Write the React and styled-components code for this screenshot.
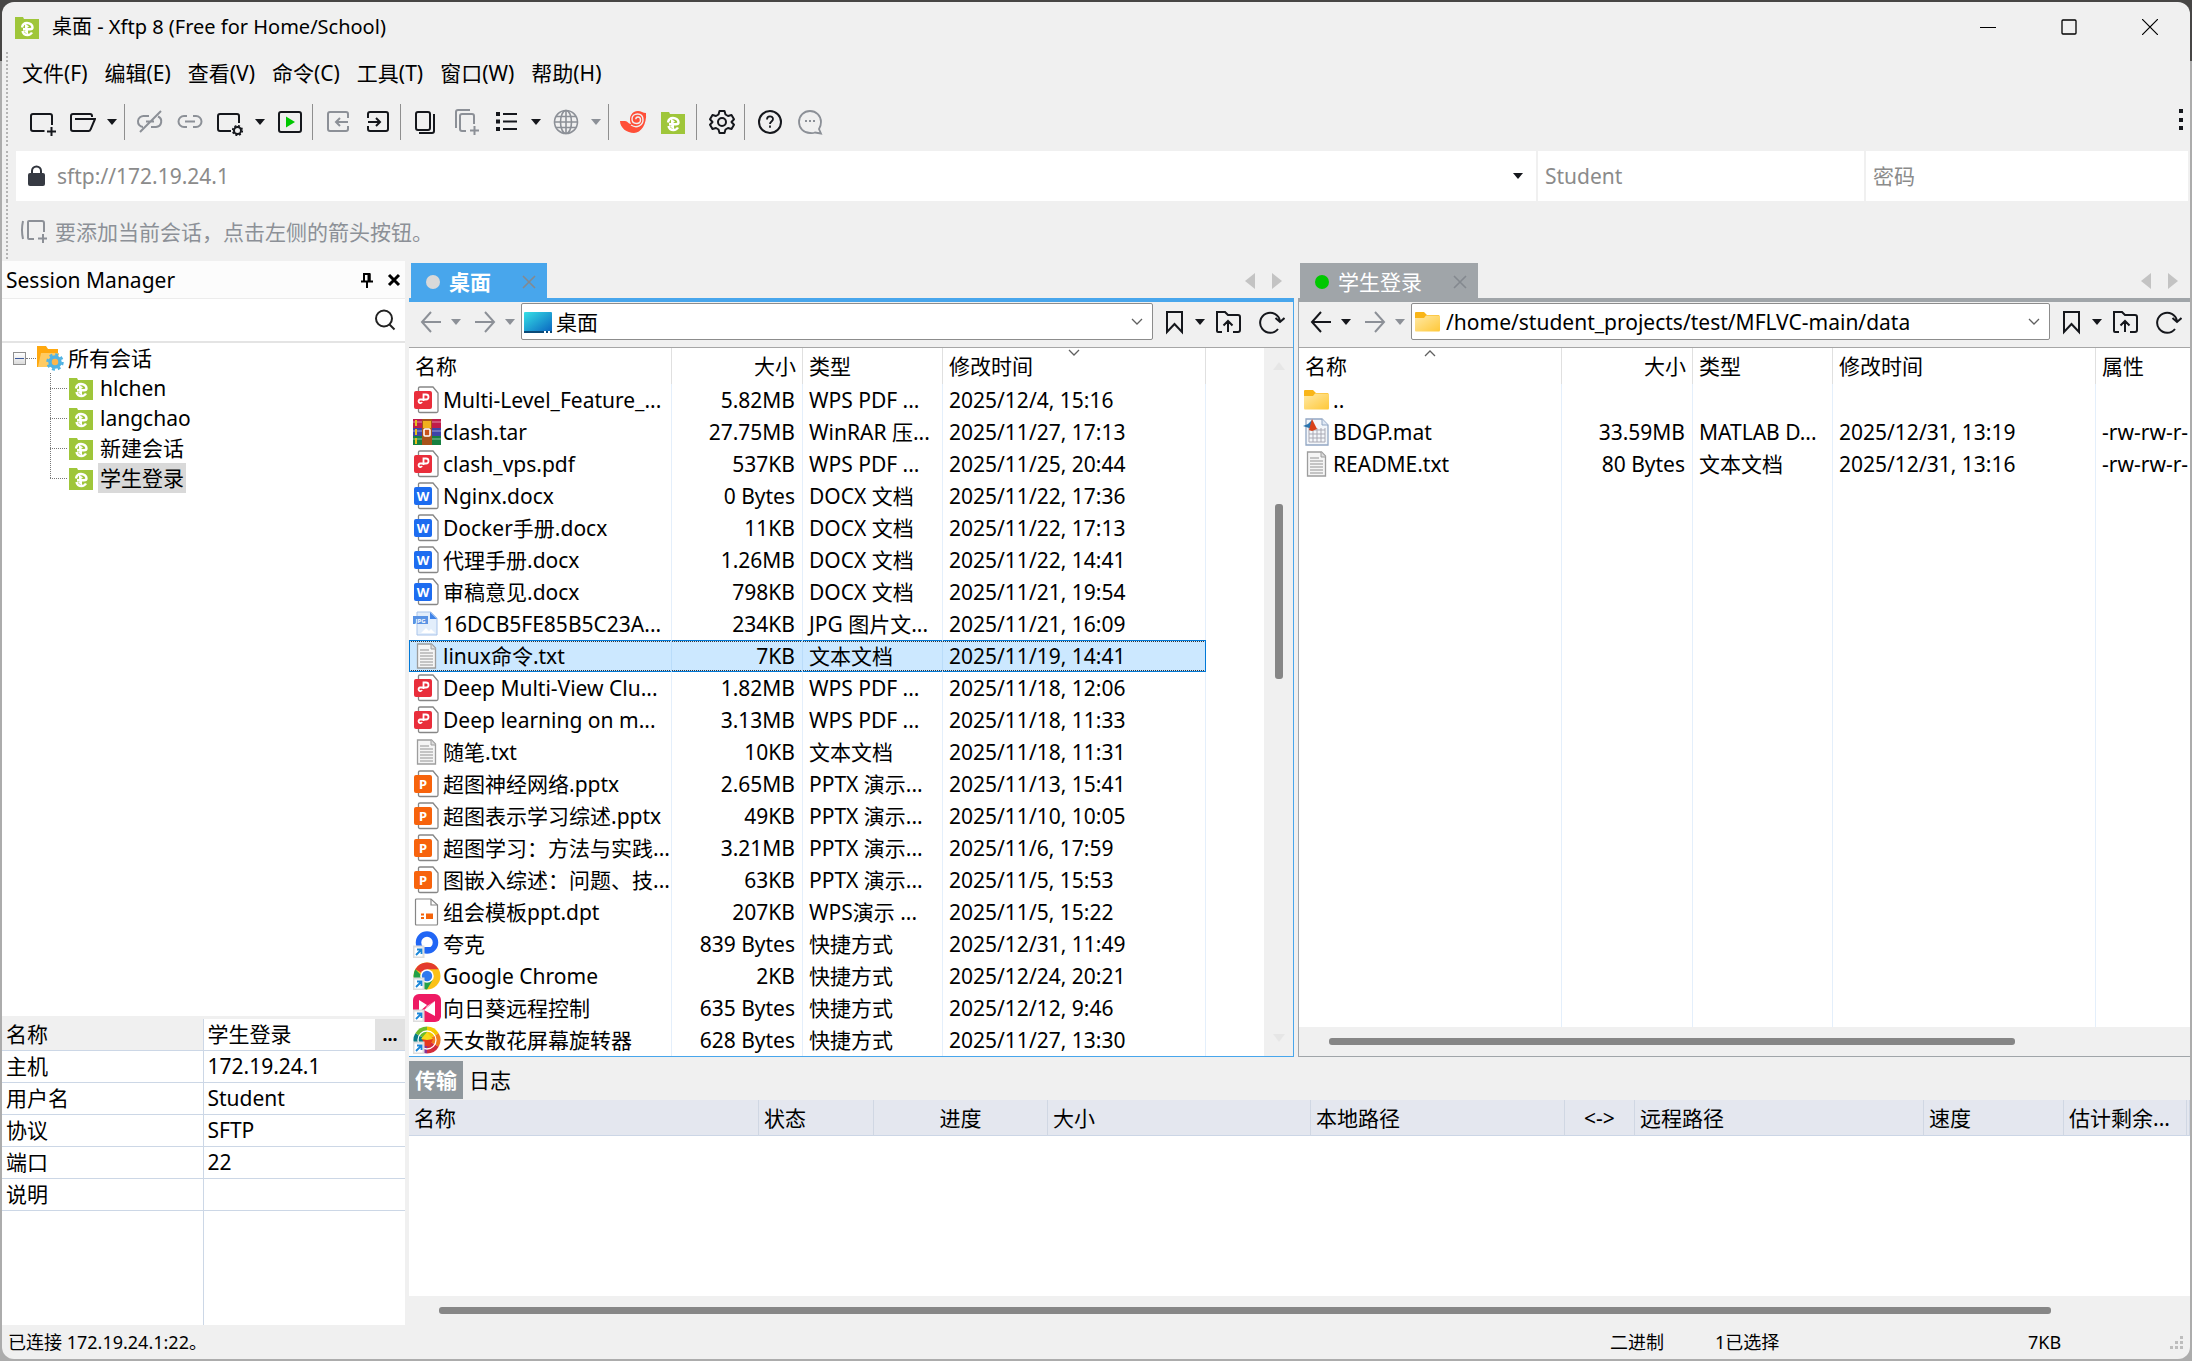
import React, { useState } from "react";
import styled, { createGlobalStyle, css } from "styled-components";

const menus = ["文件(F)", "编辑(E)", "查看(V)", "命令(C)", "工具(T)", "窗口(W)", "帮助(H)"];

const sessions = ["hlchen", "langchao", "新建会话", "学生登录"];

const localFiles = [
  ["pdf", "Multi-Level_Feature_...", "5.82MB", "WPS PDF ...", "2025/12/4, 15:16"],
  ["rar", "clash.tar", "27.75MB", "WinRAR 压...", "2025/11/27, 17:13"],
  ["pdf", "clash_vps.pdf", "537KB", "WPS PDF ...", "2025/11/25, 20:44"],
  ["doc", "Nginx.docx", "0 Bytes", "DOCX 文档", "2025/11/22, 17:36"],
  ["doc", "Docker手册.docx", "11KB", "DOCX 文档", "2025/11/22, 17:13"],
  ["doc", "代理手册.docx", "1.26MB", "DOCX 文档", "2025/11/22, 14:41"],
  ["doc", "审稿意见.docx", "798KB", "DOCX 文档", "2025/11/21, 19:54"],
  ["jpg", "16DCB5FE85B5C23A...", "234KB", "JPG 图片文...", "2025/11/21, 16:09"],
  ["txt", "linux命令.txt", "7KB", "文本文档", "2025/11/19, 14:41"],
  ["pdf", "Deep Multi-View Clu...", "1.82MB", "WPS PDF ...", "2025/11/18, 12:06"],
  ["pdf", "Deep learning on m...", "3.13MB", "WPS PDF ...", "2025/11/18, 11:33"],
  ["txt", "随笔.txt", "10KB", "文本文档", "2025/11/18, 11:31"],
  ["ppt", "超图神经网络.pptx", "2.65MB", "PPTX 演示...", "2025/11/13, 15:41"],
  ["ppt", "超图表示学习综述.pptx", "49KB", "PPTX 演示...", "2025/11/10, 10:05"],
  ["ppt", "超图学习：方法与实践...", "3.21MB", "PPTX 演示...", "2025/11/6, 17:59"],
  ["ppt", "图嵌入综述：问题、技...", "63KB", "PPTX 演示...", "2025/11/5, 15:53"],
  ["dpt", "组会模板ppt.dpt", "207KB", "WPS演示 ...", "2025/11/5, 15:22"],
  ["quark", "夸克", "839 Bytes", "快捷方式", "2025/12/31, 11:49"],
  ["chrome", "Google Chrome", "2KB", "快捷方式", "2025/12/24, 20:21"],
  ["sun", "向日葵远程控制", "635 Bytes", "快捷方式", "2025/12/12, 9:46"],
  ["wheel", "天女散花屏幕旋转器", "628 Bytes", "快捷方式", "2025/11/27, 13:30"],
];

const remoteFiles = [
  ["folder", "..", "", "", "", ""],
  ["mat", "BDGP.mat", "33.59MB", "MATLAB D...", "2025/12/31, 13:19", "-rw-rw-r-"],
  ["txt", "README.txt", "80 Bytes", "文本文档", "2025/12/31, 13:16", "-rw-rw-r-"],
];

const properties = [
  ["名称", "学生登录"],
  ["主机", "172.19.24.1"],
  ["用户名", "Student"],
  ["协议", "SFTP"],
  ["端口", "22"],
  ["说明", ""],
];

const transferColumns = [
  ["名称", 350],
  ["状态", 115],
  ["进度", 174, "center"],
  ["大小", 263],
  ["本地路径", 254],
  ["<->", 70, "center"],
  ["远程路径", 289],
  ["速度", 140],
  ["估计剩余...", 123],
  ["", null],
];

/* ---------- icons ---------- */

const Svg = ({ size = 28, children, ...rest }) => (
  <svg
    width={size}
    height={size}
    viewBox={`0 0 ${size} ${size}`}
    fill="none"
    stroke="currentColor"
    strokeWidth="2"
    aria-hidden="true"
    {...rest}
  >
    {children}
  </svg>
);

const XftpIcon = () => (
  <Svg stroke="none">
    <path d="M1 4h8l1 2h15v20H1z" fill="#9fc63a" />
    <path
      d="M8 14.500C8.500 11.500 10.500 10 13 10c3 0 5.500 2 5.500 4.200 0 1.300-.800 2-2.500 2H9M8.500 18c.500 2.500 2.500 4 5 4 2 0 3.500-.800 4.500-2.500"
      fill="none"
      stroke="#fff"
      strokeWidth="2.400"
    />
    <path d="M11 10.500v6l4-3zM14 15.500v6l-4-3z" fill="#fff" />
  </Svg>
);

const NewIcon = () => (
  <Svg>
    <path d="M16.500 23H5q-2 0-2-2V8q0-2 2-2H22q2 0 2 2v9M23.500 19v9M19 23.500h9" />
  </Svg>
);

const OpenIcon = () => (
  <Svg>
    <path d="M24 9V8q0-2-2-2H5q-2 0-2 2v13q0 2 2 2h15.500q1.500 0 2-1.500L27 11H7" />
  </Svg>
);

const UnlinkIcon = () => (
  <Svg>
    <path d="M13 8H8a5.500 5.500 0 0 0-1 11M10 13.500h8M15 19h5a5.500 5.500 0 0 0 2-10.500M4 24 25 3" />
  </Svg>
);

const LinkIcon = () => (
  <Svg>
    <path d="M11 8H8a5.500 5.500 0 0 0 0 11h3M17 8h3a5.500 5.500 0 0 1 0 11h-3M9 13.500h10" />
  </Svg>
);

const SessionGearIcon = () => (
  <Svg>
    <path d="M15 23H4q-2 0-2-2V8q0-2 2-2H21q2 0 2 2v7" />
    <circle cx="21.500" cy="22.500" r="3.500" />
    <circle cx="21.500" cy="22.500" r="4.800" strokeDasharray="2 1.770" strokeWidth="1.600" />
  </Svg>
);

const RunIcon = () => (
  <Svg>
    <rect x="3" y="4" width="22" height="20" rx="2" />
    <path d="M10 8.500v11l9-5.500z" fill="#00c800" stroke="none" />
  </Svg>
);

const ImportIcon = () => (
  <Svg>
    <path d="M24 10V6q0-2-2-2H6Q4 4 4 6v15q0 2 2 2h16q2 0 2-2v-3M24 14H12m4-4-4 4 4 4" />
  </Svg>
);

const ExportIcon = () => (
  <Svg>
    <path d="M4 10V6q0-2 2-2h16q2 0 2 2v15q0 2-2 2H6q-2 0-2-2v-3M4 14h12m-4-4 4 4-4 4" />
  </Svg>
);

const CopyIcon = () => (
  <Svg>
    <rect x="4" y="4" width="14" height="18" rx="2" />
    <path d="M22 6v17q0 2-2 2H7" />
  </Svg>
);

const CopyPlusIcon = () => (
  <Svg>
    <path d="M4 20V4q0-2 2-2h12M14 23h-4q-2 0-2-2V8q0-2 2-2h10q2 0 2 2v8M22.500 18v9M18 22.500h9" />
  </Svg>
);

const ListIcon = () => (
  <Svg>
    <path d="M11 6h14M11 13.500h14M11 21h14" />
    <path d="M4 4h4v4H4zM4 11.500h4v4H4zM4 19h4v4H4z" fill="currentColor" stroke="none" />
  </Svg>
);

const GlobeIcon = () => (
  <Svg strokeWidth="1.600">
    <circle cx="14" cy="14" r="11.500" />
    <ellipse cx="14" cy="14" rx="5.500" ry="11.500" />
    <path d="M14 2.500v23M2.500 14h23M4 8.500h20M4 19.500h20" />
  </Svg>
);

const ShellIcon = () => (
  <Svg>
    <path
      d="M0 13h5c3 0 3 3 6 3C8 9 12 3 18 3c3 0 5 2 8 2 1 11-5 20-12 20C7 25 0 20 0 13z"
      fill="#ff4f38"
      stroke="none"
    />
    <path
      d="M11 17c6 4 12 0 12-5 0-4-2.500-6-5.500-6S12 8 12 11s2 4.500 4.500 4.500 4-1.500 4-3.500-1-3-2.500-3-2.200 1-2.200 2.200"
      stroke="#f0f0f0"
      strokeWidth="1.400"
    />
  </Svg>
);

const GearIcon = () => (
  <Svg>
    <path
      d="M11.500 3h5l1 3.500 2.500 1.500 3.500-1 2.500 4.300-2.500 2.700 2.500 2.700-2.500 4.300-3.500-1-2.500 1.500-1 3.500h-5l-1-3.500L8 20l-3.500 1L2 16.700 4.500 14 2 11.300 4.500 7 8 8l2.500-1.500z"
      strokeLinejoin="round"
    />
    <circle cx="14" cy="14" r="4" />
  </Svg>
);

const HelpIcon = () => (
  <Svg>
    <circle cx="14" cy="14" r="11" />
    <path d="M11 11.500c0-4 6-4 6-.500 0 2.500-3 2.500-3 5M14 17.500v2.200" strokeWidth="1.800" />
  </Svg>
);

const ChatIcon = () => (
  <Svg strokeWidth="1.800">
    <path d="M14 25a11 11 0 1 1 11-11q0 4-2 7l2 4.500-6-1q-2 1-5 .500z" />
    <path d="M9 13h2M13 13h2M17 13h2" />
  </Svg>
);

const LockIcon = () => (
  <Svg size={24} stroke="#2f333b">
    <path d="M8 10V7a4.500 4.500 0 0 1 9 0v2" />
    <rect x="4" y="9" width="17" height="13" rx="2" fill="#363a43" stroke="none" />
  </Svg>
);

const HintIcon = () => (
  <Svg>
    <path d="M3 4q-2 9 0 18M14 22H9q-1 0-1-1V5q0-1 1-1h13q2 0 2 2v9M23 17v9M18 21.500h9" />
  </Svg>
);

const PinIcon = () => (
  <Svg size={16}>
    <path d="M5 1v8M5 2h6M10.500 1v8M2 9.500h12M8 10v6" />
    <path d="M10 2v7" strokeWidth="3" />
  </Svg>
);

const CloseIcon = ({ size = 16, width = 2 }) => (
  <Svg size={size} strokeWidth={width}>
    <path d={`M2 2 ${size - 2} ${size - 2}M${size - 2} 2 2 ${size - 2}`} />
  </Svg>
);

const SearchIcon = () => (
  <Svg size={24} stroke="#222">
    <circle cx="11" cy="10.500" r="8" />
    <path d="m16.500 16.500 5 5" />
  </Svg>
);

const ArrowIcon = ({ right }) => (
  <Svg size={24} transform={right ? "scale(-1 1)" : undefined}>
    <path d="M12 2 3 12l9 10M3 12h19" />
  </Svg>
);

const Chevron = ({ up }) => (
  <Svg size={14} stroke="#606060" strokeWidth="1.300" transform={up ? "scale(1 -1)" : undefined}>
    <path d="m2 4 5 5 5-5" />
  </Svg>
);

const BookmarkIcon = () => (
  <Svg size={26}>
    <path d="M5 3h15v20l-7.500-8L5 23z" />
  </Svg>
);

const FolderUpIcon = () => (
  <Svg size={26}>
    <path d="M7 23H3q-1 0-1-1V3h8l3 3h10q2 0 2 2v13q0 2-2 2h-5M13 23V12M8.500 16.500 13 12l4.500 4.500" />
  </Svg>
);

const RefreshIcon = () => (
  <Svg size={26}>
    <path d="M19 20A10 10 0 1 1 21 12M16.500 9 21 13l4.500-4" />
  </Svg>
);

const DesktopIcon = () => (
  <Svg stroke="none">
    <defs>
      <linearGradient id="desk" x1="0" y1="0" x2="1" y2="1">
        <stop offset="0" stopColor="#35e0e6" />
        <stop offset="1" stopColor="#0a64c0" />
      </linearGradient>
    </defs>
    <rect x="0" y="4" width="28" height="20" rx="1" fill="url(#desk)" />
    <path d="M0 23h28v2H0z" fill="#0b4a78" />
    <path d="M20 23h2v2h-2zM24 23h2v2h-2z" fill="#fff" />
  </Svg>
);

const FolderIcon = () => (
  <Svg stroke="none">
    <defs>
      <linearGradient id="fold" x1="0" y1="0" x2="1" y2="1">
        <stop offset="0" stopColor="#ffe9a6" />
        <stop offset="1" stopColor="#ffc838" />
      </linearGradient>
    </defs>
    <path d="M1 5q0-1 1-1h8l3 3h12v5H1z" fill="#f9b517" />
    <path d="M1 10h9l2-2.500h14V22q0 1.500-1 1.500H2q-1 0-1-1.500z" fill="url(#fold)" />
  </Svg>
);

const RootFolderIcon = () => (
  <Svg stroke="none">
    <path d="M1 2h9l2 3h10v18H1z" fill="#ffa80e" />
    <path d="M2 23 5 9h18l-2 14z" fill="#ffcb62" />
    <circle cx="19" cy="18" r="5" fill="#fdb64c" stroke="#51b3e3" strokeWidth="3.500" />
    <circle cx="19" cy="18" r="7.500" fill="none" stroke="#51b3e3" strokeWidth="2.500" strokeDasharray="3 2.890" />
  </Svg>
);

const Page = ({ color, letter }) => (
  <>
    <path d="M5.500 2q0-1 1.500-1h13l5 6v18q0 1.500-1.500 1.500H7q-1.500 0-1.500-1.500z" fill="#fff" stroke="#868686" strokeWidth="1.300" />
    <rect x="1" y="5" width="18" height="18" rx="2" fill={color} />
    {letter ? (
      <text x="10" y="18.500" fontSize="13" fontWeight="700" fill="#fff" textAnchor="middle">
        {letter}
      </text>
    ) : (
      <path d="M10.500 15V8.500h2.500a2.500 2.500 0 0 1 0 5H7a1.800 1.800 0 1 0 2 2.500" fill="none" stroke="#fff" strokeWidth="1.800" />
    )}
  </>
);

const Shortcut = () => (
  <>
    <rect x="0.500" y="16.500" width="10" height="11" fill="#fff" stroke="#ddd" />
    <path d="m3 25 5-5M4 19.500h4.500V24" fill="none" stroke="#1a86d8" strokeWidth="1.800" />
  </>
);

const glyphs = {
  pdf: <Page color="#e92e3b" />,
  doc: <Page color="#1d6cf0" letter="W" />,
  ppt: <Page color="#f7630c" letter="P" />,
  rar: (
    <>
      <path d="M0 1h28v9H0z" fill="#c01c4a" />
      <path d="M0 10h28v8H0z" fill="#3d44a8" />
      <path d="M0 18h28v9H0z" fill="#178040" />
      <path d="M0 4h28M0 13h28M0 21h28" stroke="#ffffff55" strokeWidth="1.500" />
      <path d="M3 2v24" stroke="#e8c11c" strokeDasharray="6 3" />
      <path d="M9 1h10v26H9z" fill="#a8521a" />
      <path d="M10 3h8v7h-8z" fill="#f2b01e" />
      <rect x="11" y="11" width="6" height="7" rx="1" fill="#c9531b" stroke="#fff" strokeWidth="1.600" />
    </>
  ),
  jpg: (
    <>
      <path d="M4 2h14l6 6v17H4z" fill="#e3eefb" stroke="#a9c4ea" strokeWidth="1" />
      <path d="M17 2v7h7z" fill="#4285e8" />
      <rect x="0" y="6" width="15" height="8" fill="#5a93e4" />
      <text x="7.500" y="12.500" fontSize="6" fontWeight="700" fill="#fff" textAnchor="middle">JPG</text>
      <path d="m8 23 5-5 3 3 2-2 4 4z" fill="#fff" />
    </>
  ),
  txt: (
    <>
      <path d="M4.500 2h14l4 4v20h-18z" fill="#f5f5f5" stroke="#9d9d9d" strokeWidth="1.300" />
      <path d="M18 2v5h4.500" fill="#ddd" stroke="#9d9d9d" strokeWidth="1" />
      <path d="M7 8h9M7 11h13M7 14h13M7 17h13M7 20h13M7 23h13" stroke="#b4b4b4" strokeWidth="1.400" />
    </>
  ),
  dpt: (
    <>
      <path d="M2.500 2q0-1 1-1H18l6.500 6v19q0 1-1 1h-20q-1 0-1-1z" fill="#fff" stroke="#868686" strokeWidth="1.200" />
      <path d="M18 1v6h6.500" stroke="#868686" strokeWidth="1.200" fill="none" />
      <path d="M8 15.500h3v2H8zM8 19h3v2H8zM13 15.500h7v5.500h-7z" fill="#f4640c" />
    </>
  ),
  quark: (
    <>
      <circle cx="14" cy="12.500" r="8.500" fill="none" stroke="#2166f5" strokeWidth="5.500" />
      <path d="M11 17q2 6 7 5v-5z" fill="#2166f5" />
      <Shortcut />
    </>
  ),
  chrome: (
    <>
      <circle cx="14" cy="14" r="13.500" fill="#fbc116" />
      <path d="M14 14 2.300 7.300A13.500 13.500 0 0 1 25.700 7.300H14z" fill="#e33b2e" />
      <path d="M2.300 7.300A13.500 13.500 0 0 0 14 27.500l6-10.200-6 1.700z" fill="#24a148" />
      <circle cx="14" cy="14" r="6.800" fill="#fff" />
      <circle cx="14" cy="14" r="5.200" fill="#3079ee" />
      <Shortcut />
    </>
  ),
  sun: (
    <>
      <rect x="0" y="0" width="28" height="28" rx="6" fill="#ee1a63" />
      <path d="m6 6 8 5-8 7zM22 7v15l-11-6z" fill="#fff" />
      <path d="m14 12 8-5-10 8z" fill="#ffb7d0" />
      <Shortcut />
    </>
  ),
  wheel: (
    <>
      <path d="M14 14 14 .500A13.500 13.500 0 0 1 25.700 7.300z" fill="#f4c800" />
      <path d="M14 14 25.700 7.300A13.500 13.500 0 0 1 25.700 20.700z" fill="#f07a1c" />
      <path d="M14 14 25.700 20.700A13.500 13.500 0 0 1 14 27.500z" fill="#d22c3c" />
      <path d="M14 14 14 27.500A13.500 13.500 0 0 1 2.300 20.700z" fill="#8b2f92" />
      <path d="M14 14 2.300 20.700A13.500 13.500 0 0 1 2.300 7.300z" fill="#087c86" />
      <path d="M14 14 2.300 7.300A13.500 13.500 0 0 1 14 .500z" fill="#6dbb2c" />
      <circle cx="14" cy="14" r="9" fill="none" stroke="#fff" strokeWidth="1.300" />
      <path d="m14 7 6 6-3 7h-5l-3-7z" fill="#e6391e" />
      <path d="m14 6 6 7-6 1-6-1z" fill="#f6da1a" />
      <Shortcut />
    </>
  ),
  mat: (
    <>
      <path d="M3 1h16l6 6v20H3z" fill="#f3f6fa" stroke="#92a7c4" strokeWidth="1.300" />
      <path d="M19 1v6h6" fill="#dfe8f4" stroke="#92a7c4" strokeWidth="1" />
      <path d="M6 12h16M6 16h16M6 20h16M6 24h16M6 10v14M10 10v14M14 10v14M18 10v14M22 10v14" stroke="#a9a9b4" strokeWidth="1" />
      <path d="m0 8 5-2 4-4 2 10-5-2z" fill="#2b74ae" />
      <path d="m9 1 5 10-5 2-3-1z" fill="#d8421a" />
    </>
  ),
};

const FileIcon = ({ kind }) =>
  kind === "folder" ? <FolderIcon /> : <Svg stroke="none">{glyphs[kind]}</Svg>;

/* ---------- parts ---------- */

const tools = [
  ["新建", NewIcon],
  ["打开", OpenIcon],
  "caret",
  "sep",
  ["断开", UnlinkIcon, true],
  ["重新连接", LinkIcon, true],
  ["会话属性", SessionGearIcon],
  "caret",
  ["运行", RunIcon],
  "sep",
  ["下载", ImportIcon, true],
  ["上传", ExportIcon],
  "sep",
  ["复制", CopyIcon],
  ["粘贴", CopyPlusIcon, true],
  ["列表", ListIcon],
  "caret",
  ["编码", GlobeIcon, true],
  "caret-off",
  "sep",
  ["Xshell", ShellIcon],
  ["Xftp", XftpIcon],
  "sep",
  ["选项", GearIcon],
  "sep",
  ["帮助", HelpIcon],
  ["反馈", ChatIcon, true],
];

function Toolbar() {
  return (
    <ToolRow>
      <Grip />
      {tools.map((tool, i) => {
        if (tool === "sep") return <Separator key={i} />;
        if (typeof tool === "string") {
          return (
            <CaretButton key={i} aria-label="更多" $dim={tool === "caret-off"}>
              <Caret />
            </CaretButton>
          );
        }
        const [label, Icon, dim] = tool;
        return (
          <ToolButton key={i} aria-label={label} $dim={dim}>
            <Icon />
          </ToolButton>
        );
      })}
      <MoreButton aria-label="更多选项">
        <Svg size={28} stroke="none">
          <path d="M12 1h4v4h-4zM12 10h4v4h-4zM12 18h4v4h-4z" fill="currentColor" />
        </Svg>
      </MoreButton>
    </ToolRow>
  );
}

function SessionPanel() {
  return (
    <Sidebar>
      <SidebarHead>
        <span>Session Manager</span>
        <IconButton aria-label="固定"><PinIcon /></IconButton>
        <IconButton aria-label="关闭"><CloseIcon size={14} width={3} /></IconButton>
      </SidebarHead>
      <SearchBox>
        <input aria-label="搜索会话" />
        <IconButton aria-label="搜索"><SearchIcon /></IconButton>
      </SearchBox>
      <Tree>
        <TreeRoot>
          <Expander aria-label="折叠" />
          <Dots />
          <RootFolderIcon />
          <span>所有会话</span>
        </TreeRoot>
        <TreeChildren>
          {sessions.map((name) => (
            <TreeItem key={name}>
              <XftpIcon />
              <TreeLabel $selected={name === "学生登录"}>{name}</TreeLabel>
            </TreeItem>
          ))}
        </TreeChildren>
      </Tree>
      <PropertyWrap>
        <PropertyTable>
          <tbody>
            {properties.map(([key, value], i) => (
              <tr key={key}>
                <PropertyKey $active={i === 0}>{key}</PropertyKey>
                <td>
                  <PropertyValue>
                    <span>{value}</span>
                    {i === 0 && <EllipsisButton>...</EllipsisButton>}
                  </PropertyValue>
                </td>
              </tr>
            ))}
            <BlankRow>
              <td />
              <td />
            </BlankRow>
          </tbody>
        </PropertyTable>
      </PropertyWrap>
    </Sidebar>
  );
}

function FilePane({ title, path, files, active, canGoBack, sortColumn, PathIcon, dot, selected, attributes }) {
  const [value, setValue] = useState(path);
  const heads = ["名称", "大小", "类型", "修改时间", attributes ? "属性" : ""];
  return (
    <Pane>
      <TabStrip>
        <Tab $active={active}>
          <StatusDot $color={dot} />
          <span>{title}</span>
          <TabClose aria-label="关闭标签"><CloseIcon size={16} width={1.6} /></TabClose>
        </Tab>
        <TabArrows>
          <button aria-label="上一个"><Svg size={16} stroke="none"><path d="M13 0v16L3 8z" fill="#c3c3c3" /></Svg></button>
          <button aria-label="下一个"><Svg size={16} stroke="none"><path d="M3 0v16l10-8z" fill="#c3c3c3" /></Svg></button>
        </TabArrows>
      </TabStrip>
      <PaneFrame $active={active}>
        <PathBar>
          <NavButton aria-label="后退" $dim={!canGoBack}><ArrowIcon /></NavButton>
          <SmallCaret aria-label="历史" $dim={!canGoBack}><Caret /></SmallCaret>
          <NavButton aria-label="前进" $dim><ArrowIcon right /></NavButton>
          <SmallCaret aria-label="历史" $dim><Caret /></SmallCaret>
          <PathBox>
            <PathIcon />
            <input aria-label="路径" value={value} onChange={(e) => setValue(e.target.value)} />
            <IconButton aria-label="展开"><Chevron /></IconButton>
          </PathBox>
          <PathTools>
            <IconButton aria-label="书签"><BookmarkIcon /></IconButton>
            <SmallCaret aria-label="书签列表"><Caret /></SmallCaret>
            <IconButton aria-label="上级目录"><FolderUpIcon /></IconButton>
            <IconButton aria-label="刷新"><RefreshIcon /></IconButton>
          </PathTools>
        </PathBar>
        <ListArea>
          <ListColumn>
            <TableClip>
              <FileTable>
                <colgroup>
                  <col style={{ width: 263 }} />
                  <col style={{ width: 131 }} />
                  <col style={{ width: 140 }} />
                  <col style={{ width: 263 }} />
                  <col />
                </colgroup>
                <thead>
                  <tr>
                    {heads.map((head, i) => (
                      <FileHead key={i} $right={i === 1} $last={i === 4}>
                        {sortColumn === i && <SortMark><Chevron up={attributes} /></SortMark>}
                        {head}
                      </FileHead>
                    ))}
                  </tr>
                </thead>
                <tbody>
                  {files.map(([kind, name, size, type, date, attr], i) => (
                    <FileRow key={name} $selected={selected === i}>
                      <td>
                        <NameCell>
                          <FileIcon kind={kind} />
                          <span>{name}</span>
                        </NameCell>
                      </td>
                      <SizeCell>{size}</SizeCell>
                      <td>{type}</td>
                      <td>{date}</td>
                      <td>{attr}</td>
                    </FileRow>
                  ))}
                  <BlankRow>
                    <td /><td /><td /><td /><td />
                  </BlankRow>
                </tbody>
              </FileTable>
            </TableClip>
            {attributes && (
              <HorizontalTrack $before={30} $after={175}><Thumb /></HorizontalTrack>
            )}
          </ListColumn>
          {!attributes && (
            <VerticalTrack>
              <Svg size={12} stroke="none"><path d="M0 10h12L6 2z" fill="#e6e6e6" /></Svg>
              <VerticalThumb />
              <Svg size={12} stroke="none"><path d="M0 2h12l-6 8z" fill="#e6e6e6" /></Svg>
            </VerticalTrack>
          )}
        </ListArea>
      </PaneFrame>
    </Pane>
  );
}

function TransferPanel() {
  return (
    <Transfer>
      <TransferTabs>
        <TransferTab $active>传输</TransferTab>
        <TransferTab>日志</TransferTab>
      </TransferTabs>
      <TransferBody>
        <TransferTable>
          <colgroup>
            {transferColumns.map(([name, width]) => (
              <col key={name} style={width ? { width } : undefined} />
            ))}
          </colgroup>
          <thead>
            <tr>
              {transferColumns.map(([name, , align]) => (
                <TransferHead key={name} $align={align}>{name}</TransferHead>
              ))}
            </tr>
          </thead>
        </TransferTable>
      </TransferBody>
      <HorizontalTrack $before={30} $after={139}><Thumb /></HorizontalTrack>
    </Transfer>
  );
}

export default function App() {
  return (
    <>
      <GlobalStyle />
      <Desktop>
        <Window>
          <TitleBar>
            <XftpIcon />
            <h1>桌面 - Xftp 8 (Free for Home/School)</h1>
            <WindowButton aria-label="最小化"><Svg size={16} strokeWidth="1"><path d="M0 8.500h16" /></Svg></WindowButton>
            <WindowButton aria-label="最大化"><Svg size={16} strokeWidth="1.300"><rect x="1" y="1" width="14" height="14" rx="1" /></Svg></WindowButton>
            <WindowButton aria-label="关闭"><Svg size={16} strokeWidth="1.200"><path d="m0 0 16 16M16 0 0 16" /></Svg></WindowButton>
          </TitleBar>
          <MenuBar>
            <Grip />
            {menus.map((menu) => (
              <MenuButton key={menu}>{menu}</MenuButton>
            ))}
          </MenuBar>
          <Toolbar />
          <AddressRow>
            <Grip />
            <AddressField>
              <LockIcon />
              <input aria-label="地址" placeholder="sftp://172.19.24.1" />
              <CaretButton aria-label="地址历史"><Caret /></CaretButton>
            </AddressField>
            <UserField aria-label="用户名" placeholder="Student" />
            <PasswordField aria-label="密码" type="password" placeholder="密码" />
          </AddressRow>
          <HintRow>
            <Grip />
            <HintIcon />
            <span>要添加当前会话，点击左侧的箭头按钮。</span>
          </HintRow>
          <Workspace>
            <SessionPanel />
            <MainArea>
              <Panes>
                <FilePane
                  title="桌面"
                  path="桌面"
                  files={localFiles}
                  active
                  sortColumn={3}
                  PathIcon={DesktopIcon}
                  dot="#d9d9d9"
                  selected={8}
                />
                <FilePane
                  title="学生登录"
                  path="/home/student_projects/test/MFLVC-main/data"
                  files={remoteFiles}
                  canGoBack
                  sortColumn={0}
                  PathIcon={FolderIcon}
                  dot="#00c800"
                  attributes
                />
              </Panes>
              <TransferPanel />
            </MainArea>
          </Workspace>
          <StatusBar>
            <span>已连接 172.19.24.1:22。</span>
            <StatusCell $width={105}>二进制</StatusCell>
            <StatusCell $width={313}>1已选择</StatusCell>
            <StatusCell $width={142}>7KB</StatusCell>
            <Svg size={16} stroke="none">
              <path d="M10 2h3v3h-3zM10 7h3v3h-3zM5 7h3v3H5zM10 12h3v3h-3zM5 12h3v3H5zM0 12h3v3H0z" fill="#bdbdbd" />
            </Svg>
          </StatusBar>
        </Window>
      </Desktop>
    </>
  );
}

/* ---------- styles ---------- */

const GlobalStyle = createGlobalStyle`
  * {
    box-sizing: border-box;
  }

  body {
    margin: 0;
    color: #000;
    font: 400 21px/30px "Noto Sans", "Noto Sans CJK SC", sans-serif;
  }

  button, input {
    margin: 0;
    padding: 0;
    border: 0;
    background: none;
    color: inherit;
    font: inherit;
    outline: none;
  }

  svg {
    display: block;
    flex: none;
  }
`;

const Desktop = styled.div`
  display: flex;
  min-height: 100vh;
  padding: 2px;
  background: linear-gradient(#474645 0 61px, #acacac 61px);
`;

const Window = styled.div`
  display: flex;
  flex: 1;
  flex-direction: column;
  min-width: 0;
  overflow: hidden;
  border-radius: 12px;
  background: #f0f0f0;
`;

const TitleBar = styled.header`
  display: flex;
  align-items: center;
  height: 50px;
  padding-left: 12px;

  h1 {
    flex: 1;
    margin: 0;
    padding-left: 10px;
    font-size: 20px;
    font-weight: 400;
  }
`;

const WindowButton = styled.button`
  display: flex;
  align-items: center;
  justify-content: center;
  width: 81px;
  height: 48px;
`;

const Grip = styled.span`
  align-self: stretch;
  width: 14px;
  flex: none;
  background: repeating-linear-gradient(#b4b4b4 0 2px, transparent 2px 4px) 4px 0 / 2px 100% no-repeat;
`;

const MenuBar = styled.nav`
  display: flex;
  align-items: flex-start;
  height: 44px;
`;

const MenuButton = styled.button`
  height: 42px;
  padding: 0 11px 0 6px;
  white-space: nowrap;
`;

const ToolRow = styled.div`
  display: flex;
  align-items: center;
  height: 52px;
  color: #15171c;
`;

const ToolButton = styled.button`
  display: flex;
  align-items: center;
  justify-content: center;
  width: 40px;
  height: 40px;
  color: ${({ $dim }) => ($dim ? "#8c9097" : "#15171c")};

  ${Grip} + & {
    margin-left: 6px;
  }
`;

const CaretButton = styled.button`
  display: flex;
  align-items: center;
  justify-content: center;
  width: 20px;
  height: 40px;
  color: ${({ $dim }) => ($dim ? "#8c9097" : "#15171c")};
`;

const Caret = styled.i`
  border: 5px solid transparent;
  border-top: 6px solid currentColor;
  border-bottom: 0;
`;

const Separator = styled.span`
  width: 1px;
  height: 36px;
  margin: 0 5px 0 2px;
  background: #8f8f8f;
`;

const MoreButton = styled.button`
  margin-left: auto;
  margin-right: -5px;
`;

const AddressRow = styled.div`
  display: flex;
  height: 53px;
  gap: 2px;
  padding: 3px 2px 0 0;

  ${Grip} {
    margin-right: -2px;
  }

  input {
    min-width: 0;
  }

  input::placeholder {
    color: #8b8b8b;
    opacity: 1;
  }
`;

const AddressField = styled.div`
  display: flex;
  flex: 1;
  align-items: center;
  padding: 0 8px;
  background: #fff;

  input {
    flex: 1;
    padding: 0 9px;
  }
`;

const UserField = styled.input`
  && {
    width: 326px;
    padding: 0 7px;
    background: #fff;
  }
`;

const PasswordField = styled.input`
  && {
    width: 322px;
    padding: 0 7px;
    background: #fff;
  }
`;

const HintRow = styled.div`
  display: flex;
  align-items: center;
  height: 60px;
  color: #8c9097;

  svg {
    margin-left: 4px;
  }

  span:last-child {
    padding: 2px 0 0 7px;
  }
`;

const Workspace = styled.div`
  display: grid;
  grid-template-columns: 403px minmax(0, 1fr);
  flex: 1;
  gap: 4px;
`;

const Sidebar = styled.aside`
  display: flex;
  flex-direction: column;
  background: #fff;
`;

const SidebarHead = styled.div`
  display: flex;
  align-items: center;
  height: 38px;
  gap: 12px;
  padding: 0 4px;
  border-bottom: 1px solid #ececec;
  background: #fcfcfc;

  span {
    flex: 1;
  }
`;

const IconButton = styled.button`
  display: flex;
  align-items: center;
  justify-content: center;
`;

const SearchBox = styled.div`
  display: flex;
  align-items: center;
  height: 44px;
  padding: 0 8px 0 4px;
  border-bottom: 2px solid #e4e4e4;

  input {
    flex: 1;
    min-width: 0;
  }
`;

const Tree = styled.div`
  flex: 1;
`;

const TreeRoot = styled.div`
  display: flex;
  align-items: center;
  height: 30px;
  padding-left: 11px;

  span {
    padding-left: 4px;
  }
`;

const Expander = styled.button`
  width: 13px;
  height: 13px;
  border: 1px solid #909090;
  background: linear-gradient(#3e5a9c, #3e5a9c) center / 9px 1px no-repeat, linear-gradient(#fff, #dcdcdc);
`;

const Dots = styled.i`
  width: 10px;
  border-top: 1px dotted #777;
`;

const TreeChildren = styled.ul`
  margin: 0;
  padding: 0 0 0 48px;
  list-style: none;
`;

const TreeItem = styled.li`
  display: flex;
  align-items: center;
  height: 30px;
  background:
    repeating-linear-gradient(90deg, #777 0 1px, transparent 1px 2px) 0 15px / 17px 1px no-repeat,
    repeating-linear-gradient(#777 0 1px, transparent 1px 2px) 0 0 / 1px 100% no-repeat;

  &:last-child {
    background:
      repeating-linear-gradient(90deg, #777 0 1px, transparent 1px 2px) 0 15px / 17px 1px no-repeat,
      repeating-linear-gradient(#777 0 1px, transparent 1px 2px) 0 0 / 1px 50% no-repeat;
  }

  svg {
    margin-left: 18px;
  }
`;

const TreeLabel = styled.span`
  margin-left: 2px;
  padding: 0 2px;
  background: ${({ $selected }) => ($selected ? "#d9d9d9" : "transparent")};
`;

const PropertyWrap = styled.div`
  display: grid;
  height: 309px;
  border-top: 3px solid #f0f0f0;
`;

const PropertyTable = styled.table`
  width: 100%;
  border-collapse: separate;
  border-spacing: 0;
  table-layout: fixed;

  th, td {
    height: 32px;
    padding: 0 4px;
    border-bottom: 1px solid #ccd7e6;
    text-align: left;
    font-weight: 400;
    line-height: 31px;
  }

  td {
    padding-right: 0;
  }

  th, tr:last-child td:first-child {
    border-right: 1px solid #ccd7e6;
  }
`;

const PropertyKey = styled.th.attrs({ scope: "row" })`
  background: ${({ $active }) => ($active ? "#f0f0f0" : "#fff")};
`;

const PropertyValue = styled.div`
  display: flex;
  justify-content: space-between;
  height: 31px;
`;

const EllipsisButton = styled.button`
  width: 30px;
  background: #e2e2e2;
  font-weight: 700;
  font-size: 18px;
`;

const BlankRow = styled.tr`
  && td {
    height: auto;
    padding: 0;
    border-bottom: 0;
  }
`;

const MainArea = styled.main`
  display: flex;
  flex-direction: column;
  min-width: 0;
`;

const Panes = styled.div`
  display: grid;
  grid-template-columns: minmax(0, 885fr) minmax(0, 892fr);
  gap: 4px;
`;

const Pane = styled.section`
  display: flex;
  flex-direction: column;
`;

const TabStrip = styled.div`
  display: flex;
  justify-content: space-between;
  height: 37px;
  padding: 2px 9px 0 2px;
`;

const Tab = styled.div`
  display: flex;
  align-items: center;
  padding: 2px 10px 0 15px;
  background: ${({ $active }) => ($active ? "#48a6ec" : "#a0a5a9")};
  color: #fff;
  font-weight: ${({ $active }) => ($active ? 700 : 400)};
`;

const StatusDot = styled.i`
  width: 14px;
  height: 14px;
  margin-right: 9px;
  border-radius: 50%;
  background: ${({ $color }) => $color};
`;

const TabClose = styled.button`
  margin-left: 30px;
  color: #84898f;
`;

const TabArrows = styled.div`
  display: flex;
  align-items: center;
  gap: 11px;
`;

const PaneFrame = styled.div`
  --edge: ${({ $active }) => ($active ? "#48a6ec" : "#a0a5a9")};
  display: flex;
  flex: 1;
  flex-direction: column;
  border-top: 4px solid var(--edge);
  border-bottom: 1px solid var(--edge);
  ${({ $active }) =>
    $active
      ? css`
          border-right: 1px solid var(--edge);
        `
      : css`
          border-left: 1px solid var(--edge);
        `}
`;

const PathBar = styled.div`
  display: flex;
  align-items: center;
  height: 46px;
  padding: 0 8px 6px 10px;
  border-bottom: 1px solid #a6a6a6;
  color: #15171c;
`;

const NavButton = styled.button`
  color: ${({ $dim }) => ($dim ? "#8c9097" : "#15171c")};
`;

const SmallCaret = styled(CaretButton)`
  width: 30px;
  padding-right: 4px;
`;

const PathBox = styled.div`
  display: flex;
  flex: 1;
  align-items: center;
  min-width: 0;
  height: 37px;
  margin-left: -6px;
  padding: 0 8px 0 2px;
  border: 1px solid #8c8c8c;
  border-radius: 2px;
  background: #fff;

  input {
    flex: 1;
    min-width: 0;
    padding-left: 4px;
    color: #000;
  }
`;

const PathTools = styled.div`
  display: flex;
  align-items: center;
  padding-left: 9px;

  ${IconButton} + ${IconButton} {
    margin-left: 18px;
  }

  ${SmallCaret} {
    width: 27px;
  }
`;

const ListArea = styled.div`
  display: flex;
  flex: 1;
  background: #fff;
`;

const ListColumn = styled.div`
  display: flex;
  flex: 1;
  flex-direction: column;
  min-width: 0;
`;

const TableClip = styled.div`
  display: grid;
  flex: 1;
`;

const FileTable = styled.table`
  width: 100%;
  border-collapse: separate;
  border-spacing: 0;
  table-layout: fixed;

  td {
    padding: 0 0 0 6px;
    border-right: 1px solid #e4effb;
    overflow: hidden;
    line-height: 32px;
    white-space: nowrap;
  }

  td:first-child {
    padding-left: 4px;
  }

  td:last-child {
    border-right: 0;
  }
`;

const FileHead = styled.th`
  position: relative;
  height: 36px;
  padding: 0 6px;
  border-right: ${({ $last }) => ($last ? "0" : "1px solid #e0e0e0")};
  font-weight: 400;
  line-height: 36px;
  text-align: ${({ $right }) => ($right ? "right" : "left")};
`;

const SortMark = styled.span`
  position: absolute;
  top: -2px;
  left: 50%;
  transform: translateX(-50%);
`;

const FileRow = styled.tr`
  height: 32px;

  ${({ $selected }) =>
    $selected &&
    css`
      td:not(:last-child) {
        border-right-color: #b9dcfa;
        background:
          repeating-linear-gradient(90deg, #333 0 1px, transparent 1px 2px) 0 1px / 100% 1px no-repeat,
          repeating-linear-gradient(90deg, #333 0 1px, transparent 1px 2px) 0 30px / 100% 1px no-repeat,
          #cce8ff;
        box-shadow: inset 0 1px #0078d7, inset 0 -1px #0078d7;
      }

      td:first-child {
        box-shadow: inset 0 1px #0078d7, inset 0 -1px #0078d7, inset 1px 0 #0078d7;
      }

      td:nth-child(4) {
        border-right-color: #0078d7;
      }
    `}
`;

const NameCell = styled.div`
  display: flex;
  align-items: center;
  gap: 2px;
  height: 32px;
`;

const SizeCell = styled.td`
  && {
    padding-right: 7px;
    text-align: right;
  }
`;

const VerticalTrack = styled.div`
  display: flex;
  flex-direction: column;
  align-items: center;
  justify-content: space-between;
  width: 29px;
  padding: 12px 0;
  background: #f0f0f0;
`;

const VerticalThumb = styled.i`
  width: 8px;
  height: 175px;
  margin-bottom: 222px;
  border-radius: 3px;
  background: #868686;
`;

const HorizontalTrack = styled.div`
  display: flex;
  align-items: center;
  height: 29px;
  padding: 0 ${({ $after }) => $after}px 0 ${({ $before }) => $before}px;
  background: #f0f0f0;
`;

const Thumb = styled.i`
  flex: 1;
  height: 7px;
  border-radius: 3px;
  background: #868686;
`;

const Transfer = styled.section`
  display: flex;
  flex: 1;
  flex-direction: column;
`;

const TransferTabs = styled.div`
  display: flex;
  padding: 4px 0 1px;
`;

const TransferTab = styled.button`
  height: 38px;
  padding: 0 6px;
  background: ${({ $active }) => ($active ? "#8f979c" : "transparent")};
  color: ${({ $active }) => ($active ? "#fff" : "#000")};
  font-weight: ${({ $active }) => ($active ? 700 : 400)};
`;

const TransferBody = styled.div`
  flex: 1;
  background: #fff;
`;

const TransferTable = styled.table`
  width: 100%;
  border-collapse: separate;
  border-spacing: 0;
  table-layout: fixed;
`;

const TransferHead = styled.th`
  height: 36px;
  padding: ${({ $align }) => ($align ? "0" : "0 0 0 5px")};
  overflow: hidden;
  border-right: 1px solid #d0d7e3;
  border-bottom: 1px solid #ccd6e6;
  background: #e4e7ef;
  font-weight: 400;
  line-height: 34px;
  text-align: ${({ $align }) => $align || "left"};
  white-space: nowrap;
`;

const StatusBar = styled.footer`
  display: flex;
  align-items: center;
  height: 34px;
  padding: 0 4px 0 6px;
  font-size: 18px;

  > span:first-child {
    flex: 1;
  }
`;

const StatusCell = styled.span`
  width: ${({ $width }) => $width}px;
`;
